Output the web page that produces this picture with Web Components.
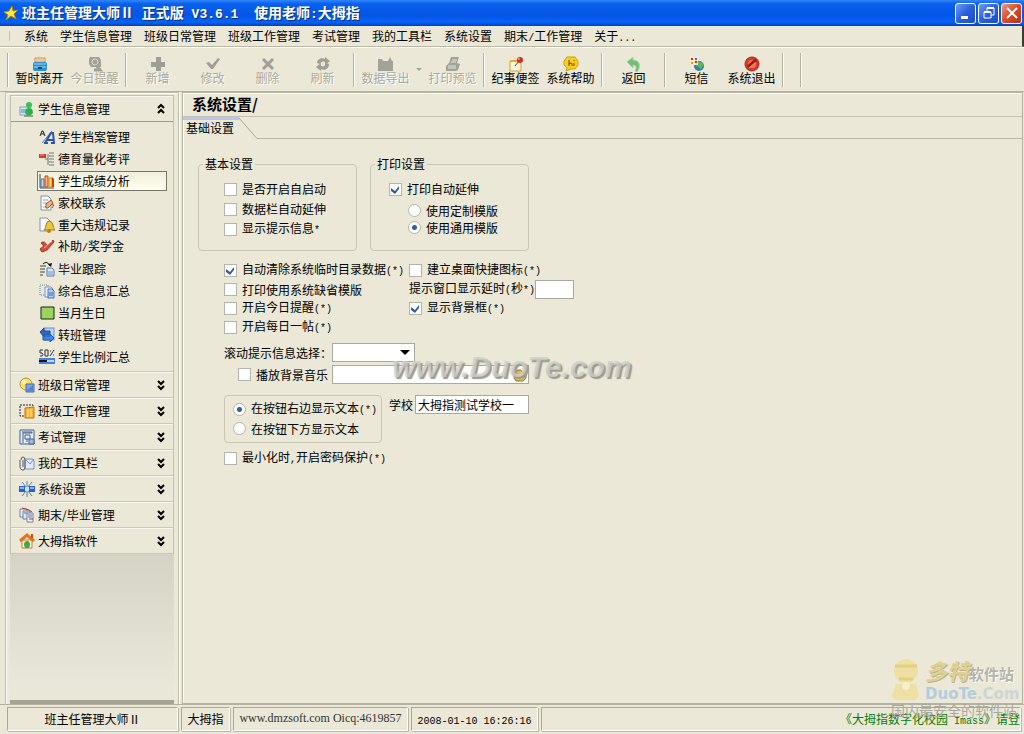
<!DOCTYPE html>
<html lang="zh-CN">
<head>
<meta charset="utf-8">
<title>班主任管理大师Ⅱ</title>
<style>
html, body { margin: 0; height: 100%; }
body {
  font: 12px/16px "Noto Sans CJK SC", sans-serif;
  color: #000;
  background: #ebe8d8;
}
</style>
</head>
<body>
<app-window></app-window>

<script>
function define(name, html, setup) {
  const template = document.createElement('template');
  template.innerHTML = html.trim();
  window.customElements.define(name, class extends HTMLElement {
    connectedCallback() {
      if (this.shadowRoot) return;
      const content = template.content.cloneNode(true);
      if (setup) setup(this, content);
      this.attachShadow({mode: "open"});
      this.shadowRoot.appendChild(content);
    }
  });
}

// 16x16 drawings, grey ones are for disabled tools
const icons = {
  star: '<path d="M9 1l1 5 5-1-4 4 2 5-5-3-5 4 2-5-4-3 5-1z" fill="#ffe34a" stroke="#a88a10"/>',
  cabinet: '<path d="M3 2h10v4H3z" fill="#fff3d0" stroke="#c98a3c"/><path d="M4 4h8" stroke="#e09a40"/><rect x="1" y="6" width="14" height="9" rx="2" fill="#2c8fd0"/><path d="M2 8h12M2 11h12" stroke="#9fd8f4"/><path d="M6 12h4" stroke="#0b4c88" stroke-width="2"/>',
  remind: '<path d="M3 1h9l2 3v7H4L2 8V3z" fill="#a3a298"/><circle cx="8" cy="6" r="3" fill="none" stroke="#dedccd"/><path d="M9 9l4 5H7" fill="none" stroke="#a3a298" stroke-width="3"/>',
  plus: '<path d="M6 1h5v5h4v5h-4v4H6v-4H1V6h5z" fill="#9f9e94"/>',
  check: '<path d="M1 7l3-1 3 3 6-7 2 1-7 10H6z" fill="#9f9e94"/>',
  cross: '<path d="M3 3l10 10M13 3L3 13" stroke="#9f9e94" stroke-width="3"/>',
  refresh: '<path d="M2 7c0-4 5-6 8-4V1l5 4-5 4V6C7 5 6 6 5 8zM14 8c0 5-5 7-8 5v2l-5-4 5-4v3c3 1 4 0 5-3z" fill="#9f9e94"/>',
  exportd: '<path d="M0 3h4l1 2h5l2-4 2 4h1v10H0z" fill="#a3a298"/>',
  printer: '<path d="M6 1h8l-2 6 3 1-2 6-2 1H1v-5l3-3z" fill="#a3a298"/><path d="M7 4h5M6 6h5M3 10h8M3 12h8" stroke="#e8e6d8"/>',
  note: '<path d="M2 5h9l2 3v7H2z" fill="#fff7d6" stroke="#d39a3c"/><path d="M2 5h11" stroke="#f0a63c" stroke-width="2"/><path d="M7 10l4-5" stroke="#444"/><circle cx="12" cy="4" r="3" fill="#cf2d20"/><circle cx="11" cy="3" r="1" fill="#ff9d86"/>',
  help: '<path d="M4 1h8l3 4v4l-3 4H8l-5 2 1-3-3-3V5z" fill="#f6cf1b" stroke="#d3a010"/><path d="M6 4v6M6 8q3-2 3 0v2M11 7v3M11 4v1" stroke="#8c3a10" fill="none"/>',
  back: '<path d="M7 1v3c6 0 8 5 5 11-1 1-2 1-3 0 2-4 1-6-2-6v3L1 6z" fill="#73bd79" stroke="#a5d6a3"/>',
  sms: '<circle cx="10" cy="10" r="5" fill="#2f83a4"/><path d="M9 6q5-1 5 4l-3 4q0-4-4-4z" fill="#5db85c"/><rect x="1" y="1" width="8" height="8" fill="#faecc4"/><path d="M2 2h2v2H2zM6 5h2v2H6z" fill="#d22"/><path d="M6 2h2v2H6z" fill="#396fc4"/><path d="M2 6h2v2H2z" fill="#e79a16"/>',
  stop: '<circle cx="8" cy="8" r="7" fill="#d83a2b" stroke="#a4261a"/><circle cx="8" cy="8" r="4" fill="#e5745f"/><path d="M4 11l8-7" stroke="#9d1c14" stroke-width="3"/><path d="M5 12l7-6" stroke="#f1a595"/>',
  person: '<rect x="1" y="6" width="10" height="8" fill="#d7e8ef" stroke="#7aa5ba"/><path d="M2 9h5M2 11h5" stroke="#4b89a8"/><circle cx="10" cy="4" r="3" fill="#39c05a"/><path d="M6 12q0-5 4-5t4 5l-2 2H8z" fill="#2fae4c"/><path d="M5 15h9" stroke="#555"/>',
  letters: '<path d="M1 7l2-5h1l2 5M2 5h3" fill="none" stroke="#222"/><path d="M3 14L13 2" stroke="#5b7dc4"/><path d="M6 14l6-10h2l1 10M8 11h6M5 14h4M12 14h4" fill="none" stroke="#2f55a8" stroke-width="2"/>',
  score: '<path d="M0 3h7v4H0z" fill="#d83a28"/><path d="M1 4h4" stroke="#ff9b84"/><path d="M10 2h5M10 5h5M10 8h5M10 11h5M10 14h5M9 3v11M6 8h3" stroke="#777"/>',
  chart: '<path d="M1 1v14h14" fill="none" stroke="#444"/><path d="M2 6h3v8H2z" fill="#b8d8ff" stroke="#3d6fb8"/><path d="M6 3h3v11H6z" fill="#ffb17c" stroke="#c34717"/><path d="M10 5h3v9h-3z" fill="#ffdd52" stroke="#c39211"/><path d="M13 4l2 2v8h-2z" fill="#c43b20"/>',
  edit: '<path d="M2 1h7l3 3v11H2z" fill="#f5f8fc" stroke="#8994aa"/><path d="M4 5h5M4 8h4M4 12h5" stroke="#9aa"/><path d="M7 9l5-4 2 3-5 5H7z" fill="#efb47c" stroke="#985832"/><path d="M13 9l2 1-2 3" stroke="#c34522" fill="none"/>',
  bell: '<path d="M1 1h7l3 3v10H1z" fill="#f4f7fc" stroke="#8994aa"/><path d="M5 13q2-2 2-5 1-4 3-4 3 0 4 4 0 3 2 5z" fill="#eec642" stroke="#a87b14"/><circle cx="10" cy="14" r="2" fill="#b78115"/>',
  brush: '<path d="M2 4q4-3 6 3l6-6 1 2-7 8-5 2-2-3 4-3z" fill="#d6503c" stroke="#a43024"/><path d="M5 9l8-7" stroke="#ffc2ae"/>',
  track: '<path d="M1 5h6M1 8h5M1 11h5M1 14h3" stroke="#444"/><path d="M4 3q4-4 7 2" stroke="#111" fill="none"/><path d="M9 3l3 3 1-4" fill="#111"/><path d="M8 7h5l2 2v6H8z" fill="#dbe8fb" stroke="#5a78ac"/><path d="M9 11h5M9 13h5" stroke="#7490bd"/>',
  pages: '<path d="M1 2h8v10H1z" fill="none" stroke="#6784b0" stroke-dasharray="1 1"/><path d="M6 4h6l2 2v8H6z" fill="#edf4ff" stroke="#7891be"/><path d="M9 6h4l2 2v7H9z" fill="#b3cdf6" stroke="#4a72b2"/><path d="M10 10h4M10 12h4" stroke="#4268a8"/>',
  green: '<path d="M2 2h13v12H2z" fill="#9bd65c" stroke="#1c2418"/>',
  move: '<rect x="5" y="1" width="10" height="12" fill="#bcd5f7" stroke="#6990d0"/><path d="M1 5l4-4v3h6v4H5v2z" fill="#2e68c4" stroke="#204b96"/><path d="M15 11l-4-4v2H4v4h7v2z" fill="#4287e3" stroke="#2157a8"/>',
  ratio: '<path d="M1 1h3M1 1v3h2q2 1 0 3H1M6 1h3v6H6zM11 7l4-6M11 2h1M14 6h1" fill="none" stroke="#333"/><path d="M0 9h16v6H0z" fill="#4d80da"/><path d="M0 11h8v2H0z" fill="#101820"/><path d="M8 11h7v2H8z" fill="#b8d4ff"/>',
  daily: '<circle cx="7" cy="7" r="6" fill="#f7df78" stroke="#bd9630"/><path d="M7 7h8v8H7z" fill="#78a7dd" stroke="#416fa8"/><path d="M8 13l6-5v6H8z" fill="#5b85c7"/><circle cx="5" cy="5" r="2" fill="#fff4b8"/>',
  work: '<path d="M1 2h13v11H1z" fill="none" stroke="#222" stroke-dasharray="2 1"/><path d="M6 5l9-1v11H6z" fill="#f7b133" stroke="#c5731b"/><path d="M9 6v8M12 6v8" stroke="#ffe394"/>',
  exam: '<path d="M1 1h14v14H1z" fill="#e4ecf7" stroke="#455f89"/><path d="M3 3h10v1H4v10M6 6h5v4H6zM8 10v3" fill="none" stroke="#455f89"/><path d="M10 10h5v5h-5z" fill="#9dbce3" stroke="#4b6796"/>',
  clip: '<path d="M6 4h8l1 2v8H6z" fill="#dfebfb" stroke="#7892b8"/><path d="M7 5l4 4 4-5" fill="none" stroke="#7892b8"/><path d="M2 5q0-3 2-3t2 3v8q-1 3-3 2t-2-3V5M4 5v7" fill="none" stroke="#535a66"/>',
  setting: '<path d="M0 5h6v6H0zM10 5h6v6h-6z" fill="#2c62c5"/><path d="M1 6h4v2H1zM11 6h4v2h-4z" fill="#86b4ff"/><path d="M8 0v16M3 1l4 5M13 1L9 6M3 15l4-5M13 15l-4-5" stroke="#577fae"/><circle cx="8" cy="8" r="2" fill="#bfe8ff"/>',
  term: '<path d="M1 2h7v8H1z" fill="#edf1f7" stroke="#7182a0"/><path d="M4 4h7v8H4z" fill="#dce5f3" stroke="#7182a0"/><path d="M8 6h6v9H8z" fill="#f2f4f8" stroke="#7182a0"/><path d="M10 12h4M3 1l7 2 3 2" stroke="#b33" fill="none"/><path d="M9 8h4M9 10h4M5 6h3" stroke="#55749d"/>',
  house: '<path d="M3 7h10v8H3z" fill="#fff2dd" stroke="#c77b2c"/><path d="M1 8l7-6 7 6" stroke="#e8731b" stroke-width="3" fill="none"/><path d="M12 1h2v4h-2z" fill="#c74d18"/><path d="M5 12q0-4 3-4t3 4l-1 3H6z" fill="#35ae43"/>',
  up: '<path d="M5 7l3-3 3 3M5 12l3-3 3 3" fill="none" stroke="#000" stroke-width="2"/>',
  down: '<path d="M5 4l3 3 3-3M5 9l3 3 3-3" fill="none" stroke="#000" stroke-width="2"/>',
  folder: '<path d="M3 5l3-2h3l1 2h4v6l-3 3H4l-2-3z" fill="#e3bd3c" stroke="#987421"/><path d="M4 8h9" stroke="#fff0a0"/>',
  min: '<path d="M3 11h7v3H3z" fill="#fff"/>',
  restore: '<path d="M6 6V3h7v7h-3M3 7h7v6H3z" fill="none" stroke="#fff"/><path d="M6 3h7M3 7h7" stroke="#fff" stroke-width="2"/>',
  close: '<path d="M3 3l10 10M13 3L3 13" stroke="#fff" stroke-width="2"/>'
};

define('ui-icon', `
  <style>
  :host { display: block; width: 16px; height: 16px; flex: none; }
  svg { display: block; }
  </style>
  <svg width="16" height="16" viewBox="0 0 16 16" aria-hidden="true"></svg>
`, (host, root) => {
  root.querySelector("svg").innerHTML = icons[host.getAttribute("name")];
});

// latin characters take half the width of a chinese one
define('half-width', `
  <style>
  :host { font-family: "Liberation Mono", monospace; font-size: 10px; white-space: pre; }
  :host([large]) { font-size: 13px; }
  </style><slot></slot>`);

define('caption-button', `
  <style>
  :host { display: block; }
  button {
    display: grid; place-items: center; width: 21px; height: 21px; padding: 0;
    border: 1px solid #fff; border-radius: 3px;
    background: linear-gradient(135deg, #6f9df5, #2a5fdd 50%, #1c4cc4);
  }
  :host([icon="close"]) button { background: linear-gradient(135deg, #f09a80, #dc4a28 50%, #b8320f); }
  </style>
  <button type="button"><ui-icon></ui-icon></button>
`, (host, root) => {
  root.querySelector("ui-icon").setAttribute("name", host.getAttribute("icon"));
  root.querySelector("button").setAttribute("aria-label", host.getAttribute("icon"));
});

define('title-bar', `
  <style>
  :host {
    display: flex; align-items: center; height: 26px; padding: 0 2px 0 3px; box-sizing: border-box;
    font-size: 14px; font-weight: bold; color: #fff;
    background: linear-gradient(#2f86fb, #0a60ee 15%, #0455e5 60%, #0663f7 85%, #0340b8);
  }
  h1 { flex: 1; margin: 0 0 0 3px; font: inherit; text-shadow: 1px 1px 0 #0a2f86; white-space: pre; }
  div { display: flex; gap: 2px; }
  </style>
  <ui-icon name="star"></ui-icon>
  <h1><slot></slot></h1>
  <div>
    <caption-button icon="min"></caption-button>
    <caption-button icon="restore"></caption-button>
    <caption-button icon="close"></caption-button>
  </div>
`);

define('menu-bar', `
  <style>
  :host {
    display: flex; gap: 12px; height: 20px; padding-left: 9px; line-height: 20px;
    border-bottom: 1px solid #bbb8a8; border-right: 2px solid #3b3a33;
  }
  :host::before { content: ""; width: 1px; margin: 5px 2px 5px 0; background: #c5c2b2; }
  </style>
  <slot></slot>
`);

define('menu-item', `
  <style>
  :host { display: block; }
  button { display: block; padding: 0; border: 0; background: none; font: inherit; line-height: 20px; color: inherit; white-space: nowrap; }
  </style>
  <button type="button"><slot></slot></button>
`);

define('tool-bar', `
  <style>
  :host {
    display: flex; height: 43px; padding-left: 4px;
    border-top: 1px solid #fff; border-bottom: 1px solid #b5b2a3;
  }
  </style>
  <slot></slot>
`);

define('tool-separator', `
  <style>
  :host { display: block; width: 1px; margin: 5px 3px 4px; border-left: 1px solid #b3b0a1; background: #fff; }
  :host([wide]) { margin-left: 13px; }
  </style>
`);

define('tool-button', `
  <style>
  :host { display: block; }
  button {
    display: flex; flex-direction: column; align-items: center; width: 55px; padding: 8px 0 0;
    border: 0; background: none; font: inherit; color: #000; white-space: nowrap;
  }
  button:disabled { color: #aaa89b; text-shadow: 1px 1px 0 #fff; }
  span { line-height: 12px; }
  </style>
  <button type="button"><ui-icon></ui-icon><span><slot></slot></span></button>
`, (host, root) => {
  root.querySelector("ui-icon").setAttribute("name", host.getAttribute("icon"));
  root.querySelector("button").disabled = host.hasAttribute("off");
});

define('tool-arrow', `
  <style>
  :host { display: grid; place-items: center; width: 12px; }
  i { border: 3px solid transparent; border-top-color: #aaa89b; border-bottom: 0; }
  </style><i></i>`);

define('side-group', `
  <style>
  :host { display: block; border-bottom: 1px solid #cbc8b9; border-top: 1px solid #f8f6ec; }
  button {
    display: flex; align-items: center; gap: 3px; width: 100%; height: 24px; padding: 0 4px 0 8px;
    border: 0; background: none; font: inherit; color: inherit;
  }
  span { flex: 1; text-align: left; }
  :host([open]) button { height: 25px; border-bottom: 1px solid #7d9fd6; }
  div { display: none; padding: 4px 6px 3px 26px; }
  :host([open]) div { display: block; }
  </style>
  <button type="button"><ui-icon id="icon"></ui-icon><span></span><ui-icon id="arrow"></ui-icon></button>
  <div><slot></slot></div>
`, (host, root) => {
  root.getElementById("icon").setAttribute("name", host.getAttribute("icon"));
  root.getElementById("arrow").setAttribute("name", host.hasAttribute("open") ? "up" : "down");
  root.querySelector("span").textContent = host.getAttribute("label");
});

define('side-item', `
  <style>
  :host { display: block; }
  a {
    display: flex; align-items: center; gap: 3px; height: 20px; padding-left: 1px;
    border: 1px solid transparent; color: #000; text-decoration: none;
  }
  :host([selected]) a { border-color: #77756a; background: linear-gradient(#f0eedc, #fffff0); height: 18px; margin: 1px 0; }
  </style>
  <a href="#"><ui-icon></ui-icon><span><slot></slot></span></a>
`, (host, root) => {
  root.querySelector("ui-icon").setAttribute("name", host.getAttribute("icon"));
});

define('side-bar', `
  <style>
  :host {
    display: flex; flex-direction: column; box-sizing: border-box; width: 174px; margin-left: 5px;
    padding: 2px 4px 0; border: 1px solid #bfbcad; border-bottom: 0; box-shadow: inset 1px 1px #fff, 1px 0 #fff;
  }
  nav { border: 1px solid #c4c1b2; border-bottom: 0; background: #ebe8d8; }
  .rest { flex: 1; background: linear-gradient(#d5d3c5, #e9e7da 90%); border-bottom: 4px solid #a5a394; }
  </style>
  <nav><slot></slot></nav>
  <div class="rest"></div>
`);

define('option-box', `
  <style>
  :host { display: block; }
  label { display: flex; align-items: center; gap: 5px; height: 100%; white-space: nowrap; }
  input {
    appearance: none; flex: none; width: 13px; height: 13px; margin: 0;
    border: 1px solid #b4b4aa; background: #fff;
  }
  input[type="radio"] { border-radius: 50%; }
  input[type="checkbox"]:checked {
    background: #fff url('data:image/svg+xml,<svg xmlns="http://www.w3.org/2000/svg" viewBox="0 0 11 11"><path d="M1 4l4 3 4-5v3L5 10 1 7z" fill="%23315f9c"/></svg>');
  }
  input[type="radio"]:checked { background: radial-gradient(circle, #315f9c 2px, #fff 3px); }
  </style>
  <label><input><span><slot></slot></span></label>
`, (host, root) => {
  const input = root.querySelector("input");
  input.type = host.getAttribute("type") || "checkbox";
  input.checked = host.hasAttribute("checked");
});

define('group-box', `
  <style>
  :host { display: block; }
  fieldset {
    box-sizing: border-box; height: 100%; min-width: 0; margin: 0; padding: 7px 0 11px;
    border: 1px solid #c9c6b6; border-radius: 4px;
  }
  legend { height: 16px; margin-left: 4px; padding: 0 2px; }
  </style>
  <fieldset><legend></legend><slot></slot></fieldset>
`, (host, root) => {
  root.querySelector("legend").textContent = host.getAttribute("label");
});

define('settings-form', `
  <style>
  :host { display: block; padding: 17px 0 0 15px; }
  .groups { display: grid; grid-template-columns: 159px 159px; gap: 13px; }
  .groups option-box { height: 20px; margin-left: 25px; }
  .print option-box { margin-left: 18px; }
  .print .pair { padding: 3px 0 0 19px; }
  .pair option-box { height: 17px; }
  .body { padding: 10px 0 0 26px; }
  .options { display: grid; grid-template-columns: 185px auto; grid-auto-rows: 19px; justify-content: start; align-items: center; }
  .field, .row { display: flex; align-items: center; }
  .row { height: 19px; margin-top: 6px; }
  .row.music { margin-top: 3px; }
  .row > label { width: 108px; }
  .music option-box { width: 94px; margin-left: 14px; }
  input, select {
    box-sizing: border-box; height: 19px; margin: 0; padding: 0 2px;
    border: 1px solid #aaa99e; border-radius: 0; background: #fff; font: inherit; color: #000;
  }
  select {
    width: 83px; appearance: none;
    background: #fff url('data:image/svg+xml,<svg xmlns="http://www.w3.org/2000/svg" viewBox="0 0 10 5"><path d="M0 0h10L5 5z"/></svg>') no-repeat right 4px center / 10px 5px;
  }
  .seconds { width: 39px; }
  .picker { display: flex; align-items: center; justify-content: flex-end; box-sizing: border-box; width: 197px; height: 19px; border: 1px solid #aaa99e; background: #fff; }
  .picker input { flex: 1; min-width: 0; height: 17px; border: 0; }
  .picker button { padding: 0; border: 0; background: none; }
  .place { display: flex; align-items: flex-start; gap: 7px; margin-top: 11px; }
  .place .box { box-sizing: border-box; width: 158px; padding: 4px 0 4px 8px; border: 1px solid #c9c6b6; border-radius: 4px; }
  .box option-box, .last { height: 19px; }
  .place .field { gap: 2px; }
  .school { width: 114px; }
  .last { margin-top: 6px; }
  </style>
  <div class="groups">
    <group-box label="基本设置">
      <option-box>是否开启自启动</option-box>
      <option-box>数据栏自动延伸</option-box>
      <option-box>显示提示信息<half-width>*</half-width></option-box>
    </group-box>
    <group-box label="打印设置" class="print">
      <option-box checked>打印自动延伸</option-box>
      <div class="pair">
        <option-box type="radio">使用定制模版</option-box>
        <option-box type="radio" checked>使用通用模版</option-box>
      </div>
    </group-box>
  </div>
  <div class="body">
    <div class="options">
      <option-box checked>自动清除系统临时目录数据<half-width>(*)</half-width></option-box>
      <option-box>建立桌面快捷图标<half-width>(*)</half-width></option-box>
      <option-box>打印使用系统缺省模版</option-box>
      <div class="field"><label for="seconds">提示窗口显示延时<half-width>(</half-width>秒<half-width>*)</half-width></label><input id="seconds" class="seconds"></div>
      <option-box>开启今日提醒<half-width>(*)</half-width></option-box>
      <option-box checked>显示背景框<half-width>(*)</half-width></option-box>
      <option-box>开启每日一帖<half-width>(*)</half-width></option-box>
    </div>
    <div class="row"><label for="tips">滚动提示信息选择：</label><select id="tips"><option></option></select></div>
    <div class="row music">
      <option-box>播放背景音乐</option-box>
      <div class="picker"><input aria-label="music"><button type="button" aria-label="open"><ui-icon name="folder"></ui-icon></button></div>
    </div>
    <div class="place">
      <div class="box">
        <option-box type="radio" checked>在按钮右边显示文本<half-width>(*)</half-width></option-box>
        <option-box type="radio">在按钮下方显示文本</option-box>
      </div>
      <div class="field"><label for="school">学校</label><input id="school" class="school" value="大拇指测试学校一"></div>
    </div>
    <option-box class="last">最小化时<half-width>,</half-width>开启密码保护<half-width>(*)</half-width></option-box>
  </div>
`);

define('main-view', `
  <style>
  :host { display: block; position: relative; border: 1px solid #b5b2a3; box-shadow: inset 1px 1px #fff; }
  h2 { margin: 0; padding-left: 9px; height: 23px; line-height: 22px; font-size: 15px; border-bottom: 1px solid #c5c2b3; }
  .tabs { display: flex; height: 22px; }
  .tab { box-sizing: border-box; width: 56px; padding: 0 0 4px 3px; border: 0; border-top: 3px solid #b9c7ec; background: none; font: inherit; text-align: left; white-space: nowrap; }
  .line { flex: 1; border-bottom: 1px solid #bab7a8; }
  svg { flex: none; }
  </style>
  <h2><slot name="title"></slot></h2>
  <div class="tabs">
    <button type="button" class="tab"><slot name="tab"></slot></button>
    <svg width="19" height="22" viewBox="0 0 19 22" aria-hidden="true"><path d="M0 1l18 20.500h1" fill="none" stroke="#aaa798"/></svg>
    <div class="line"></div>
  </div>
  <slot></slot>
`);

define('site-mark', `
  <style>
  :host {
    display: block; position: absolute; left: 209px; top: 257px;
    font: italic bold 30px/34px "Liberation Sans", sans-serif;
    color: rgba(205, 205, 200, .8); text-shadow: 2px 2px 1px #9b9a93; white-space: nowrap;
  }
  </style><slot></slot>`);

// pale mascot and site name that lie over the lower right corner
define('site-logo', `
  <style>
  :host { display: block; position: absolute; right: 5px; bottom: 16px; width: 128px; color: #b5b2a6; }
  .top { display: flex; align-items: center; gap: 4px; }
  svg { flex: none; }
  .name { white-space: nowrap; line-height: 22px; }
  b { font-size: 22px; color: #e0d18c; text-shadow: 1px 1px #b5b19b; font-style: italic; }
  strong { font-size: 15px; text-shadow: 1px 1px #fff; color: #b5b2a8; }
  .site { font: bold 15px/16px "DejaVu Sans", sans-serif; color: #b3cddd; }
  .site span { color: #ccd5d5; }
  .slogan { font-size: 14px; line-height: 16px; white-space: nowrap; color: #aaa89c; }
  </style>
  <div class="top">
    <svg width="30" height="44" viewBox="0 0 30 44" aria-hidden="true">
      <g fill="#eee0a2"><circle cx="15" cy="13" r="12"/><path d="M5 26h20l3 12-4 4H5l-4-4z"/></g>
      <path d="M4 8h22M8 21h14" stroke="#e5cf82" stroke-width="3"/><circle cx="15" cy="28" r="4" fill="#f5efcf"/>
    </svg>
    <div>
      <div class="name"><b>多特</b><strong>软件站</strong></div>
      <div class="site">DuoTe<span>.Com</span></div>
    </div>
  </div>
  <div class="slogan">国内最安全的软件站</div>
`);

define('status-bar', `
  <style>
  :host {
    display: grid; grid-template-columns: 171px 49px 175px 127px 1fr; gap: 3px;
    height: 24px; padding: 2px 3px 3px 7px; border-top: 1px solid #b5b2a3;
  }
  ::slotted(*) {
    display: block; overflow: hidden; border: 1px solid; border-color: #aaa798 #fff #fff #aaa798;
    box-shadow: 1px 1px #bab7a8; line-height: 21px; text-align: center; white-space: nowrap;
  }
  </style>
  <slot></slot>
`);

define('app-window', `
  <style>
  :host { display: flex; flex-direction: column; min-height: 100vh; }
  .work { flex: 1; display: grid; grid-template-columns: 182px 1fr; padding-right: 1px; }
  .serif { font-family: "Liberation Serif", serif; color: #333; }
  .news { color: #087b08; text-align: right; }
  </style>
  <title-bar>班主任管理大师Ⅱ<half-width large> </half-width>正式版<half-width large> V3.6.1  </half-width>使用老师<half-width large>:</half-width>大拇指</title-bar>
  <menu-bar>
    <menu-item>系统</menu-item>
    <menu-item>学生信息管理</menu-item>
    <menu-item>班级日常管理</menu-item>
    <menu-item>班级工作管理</menu-item>
    <menu-item>考试管理</menu-item>
    <menu-item>我的工具栏</menu-item>
    <menu-item>系统设置</menu-item>
    <menu-item>期末<half-width>/</half-width>工作管理</menu-item>
    <menu-item>关于<half-width>...</half-width></menu-item>
  </menu-bar>
  <tool-bar>
    <tool-separator></tool-separator>
    <tool-button icon="cabinet">暂时离开</tool-button>
    <tool-button icon="remind" off>今日提醒</tool-button>
    <tool-separator></tool-separator>
    <tool-button icon="plus" off>新增</tool-button>
    <tool-button icon="check" off>修改</tool-button>
    <tool-button icon="cross" off>删除</tool-button>
    <tool-button icon="refresh" off>刷新</tool-button>
    <tool-separator></tool-separator>
    <tool-button icon="exportd" off>数据导出</tool-button>
    <tool-arrow></tool-arrow>
    <tool-button icon="printer" off>打印预览</tool-button>
    <tool-separator></tool-separator>
    <tool-button icon="note">纪事便签</tool-button>
    <tool-button icon="help">系统帮助</tool-button>
    <tool-separator></tool-separator>
    <tool-button icon="back">返回</tool-button>
    <tool-separator></tool-separator>
    <tool-button icon="sms">短信</tool-button>
    <tool-button icon="stop">系统退出</tool-button>
    <tool-separator></tool-separator>
    <tool-separator wide></tool-separator>
  </tool-bar>
  <div class="work">
    <side-bar>
      <side-group open icon="person" label="学生信息管理">
        <side-item icon="letters">学生档案管理</side-item>
        <side-item icon="score">德育量化考评</side-item>
        <side-item icon="chart" selected>学生成绩分析</side-item>
        <side-item icon="edit">家校联系</side-item>
        <side-item icon="bell">重大违规记录</side-item>
        <side-item icon="brush">补助<half-width>/</half-width>奖学金</side-item>
        <side-item icon="track">毕业跟踪</side-item>
        <side-item icon="pages">综合信息汇总</side-item>
        <side-item icon="green">当月生日</side-item>
        <side-item icon="move">转班管理</side-item>
        <side-item icon="ratio">学生比例汇总</side-item>
      </side-group>
      <side-group icon="daily" label="班级日常管理"></side-group>
      <side-group icon="work" label="班级工作管理"></side-group>
      <side-group icon="exam" label="考试管理"></side-group>
      <side-group icon="clip" label="我的工具栏"></side-group>
      <side-group icon="setting" label="系统设置"></side-group>
      <side-group icon="term" label="期末/毕业管理"></side-group>
      <side-group icon="house" label="大拇指软件"></side-group>
    </side-bar>
    <main-view>
      <span slot="title">系统设置/</span>
      <span slot="tab">基础设置</span>
      <settings-form></settings-form>
      <site-mark>www.DuoTe.com</site-mark>
    </main-view>
  </div>
  <status-bar>
    <span>班主任管理大师Ⅱ</span>
    <span>大拇指</span>
    <span class="serif">www.dmzsoft.com Oicq:4619857</span>
    <span><half-width>2008-01-10 16:26:16</half-width></span>
    <span class="news">《大拇指数字化校园<half-width> Imass</half-width>》请登</span>
  </status-bar>
  <site-logo></site-logo>
`);
</script>
</body>
</html>
